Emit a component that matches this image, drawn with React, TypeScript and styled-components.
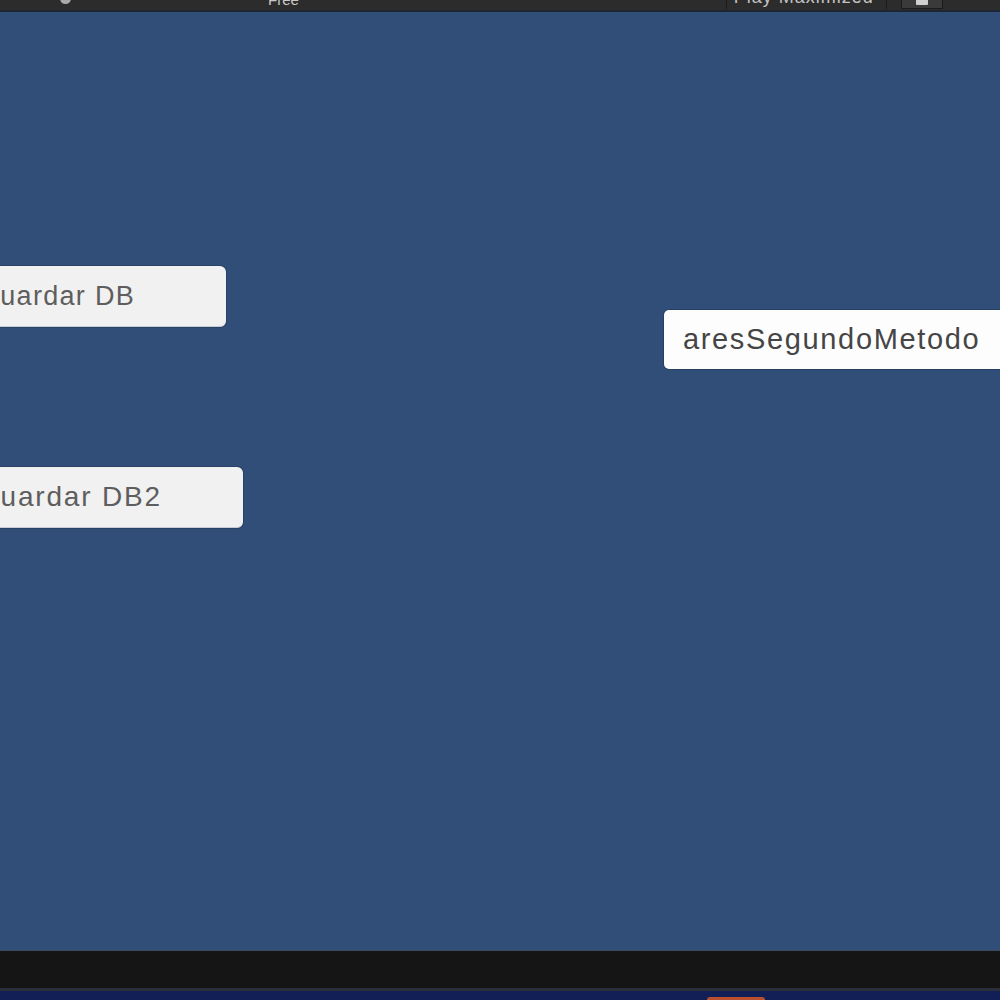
import React from "react";
import styled, { createGlobalStyle } from "styled-components";

const Global = createGlobalStyle`
  html, body { margin: 0; padding: 0; background: #151515; }
  body { font-family: "Liberation Sans", Arial, sans-serif; }
  #root { width: 1000px; height: 1000px; }
`;

const Screen = styled.div`
  width: 1000px;
  height: 1000px;
  display: flex;
  flex-direction: column;
  overflow: hidden;
`;

const TopBar = styled.div`
  height: 10px;
  flex: none;
  background: #2c2c2c;
  border-bottom: 2px solid #1f2633;
  display: flex;
  align-items: flex-end;
  overflow: hidden;
`;

const TopDot = styled.div`
  width: 11px;
  height: 11px;
  border-radius: 50%;
  background: #a9a9a9;
  margin-left: 60px;
  margin-bottom: 6px;
  flex: none;
`;

const TopLabel = styled.div<{ $ml: number }>`
  font-size: 15px;
  line-height: 15px;
  color: #c8c8c8;
  margin-left: ${(p) => p.$ml}px;
  margin-bottom: 3px;
  white-space: nowrap;
  flex: none;
`;

const TopToggle = styled.div`
  margin-left: 427px;
  height: 22px;
  margin-bottom: 1px;
  padding: 0 12px 0 7px;
  border-right: 1px solid #1c1c1c;
  border-left: 1px solid #1c1c1c;
  display: flex;
  align-items: flex-end;
  flex: none;
`;

const ToggleText = styled.span`
  font-size: 18px;
  line-height: 18px;
  color: #c4c4c4;
  margin-bottom: 3px;
  letter-spacing: 1px;
`;

const TopIconBtn = styled.div`
  margin-left: 14px;
  width: 40px;
  height: 20px;
  margin-bottom: 1px;
  background: #3a3a3a;
  border: 1px solid #1c1c1c;
  display: flex;
  justify-content: center;
  align-items: flex-end;
  flex: none;
`;

const GameView = styled.div`
  flex: 1;
  min-height: 0;
  background: #304e78;
  display: grid;
  grid-template-columns: 664px 1fr;
  align-items: start;
  overflow: hidden;
  border-bottom: 1px solid #3b4a5e;
`;

const LeftColumn = styled.div`
  display: flex;
  flex-direction: column;
  align-items: flex-start;
  padding-top: 254px;
  gap: 140px;
`;

const RightColumn = styled.div`
  padding-top: 298px;
`;

const DbButton = styled.div<{ $width: number; $pad: number; $size: number; $ls: number }>`
  width: ${(p) => p.$width}px;
  height: 61px;
  margin-left: -120px;
  box-sizing: border-box;
  padding-left: ${(p) => p.$pad}px;
  background: #f1f1f1;
  border-radius: 6px;
  border-bottom: 1px solid #c9ccd2;
  display: flex;
  align-items: center;
  font-size: ${(p) => p.$size}px;
  letter-spacing: ${(p) => p.$ls}px;
  color: #5e5e5e;
  white-space: nowrap;
  box-shadow: 0 0 0 1px rgba(20, 30, 50, 0.25);
`;

const InputBox = styled.div`
  width: 380px;
  height: 59px;
  box-sizing: border-box;
  padding-left: 19px;
  background: #fdfdfd;
  border-radius: 5px;
  display: flex;
  align-items: center;
  font-size: 29px;
  letter-spacing: 1.65px;
  color: #454545;
  white-space: nowrap;
  box-shadow: 0 0 0 1px rgba(20, 30, 50, 0.3);
`;

const BottomBar = styled.div`
  height: 37px;
  flex: none;
  background: #151515;
  border-bottom: 3px solid #2b2e3b;
`;

const Taskbar = styled.div`
  height: 9px;
  flex: none;
  background: #121e56;
  display: flex;
  align-items: flex-end;
`;

const TaskItem = styled.div`
  margin-left: 707px;
  width: 58px;
  height: 3px;
  border-radius: 3px 3px 0 0;
  background: #b8502f;
`;

export default function App() {
  return (
    <>
      <Global />
      <Screen>
        <TopBar>
          <TopDot />
          <TopLabel $ml={197}>Free</TopLabel>
          <TopToggle>
            <ToggleText>Play Maximized</ToggleText>
          </TopToggle>
          <TopIconBtn>
            <svg width="14" height="14" viewBox="0 0 14 14">
              <rect x="1" y="2" width="12" height="9" rx="1" fill="#d0d0d0" />
            </svg>
          </TopIconBtn>
        </TopBar>
        <GameView>
          <LeftColumn>
            <DbButton $width={346} $pad={98} $size={27} $ls={1.3}>
              Guardar DB
            </DbButton>
            <DbButton $width={363} $pad={97} $size={28} $ls={1.8}>
              Guardar DB2
            </DbButton>
          </LeftColumn>
          <RightColumn>
            <InputBox>aresSegundoMetodo</InputBox>
          </RightColumn>
        </GameView>
        <BottomBar />
        <Taskbar>
          <TaskItem />
        </Taskbar>
      </Screen>
    </>
  );
}
